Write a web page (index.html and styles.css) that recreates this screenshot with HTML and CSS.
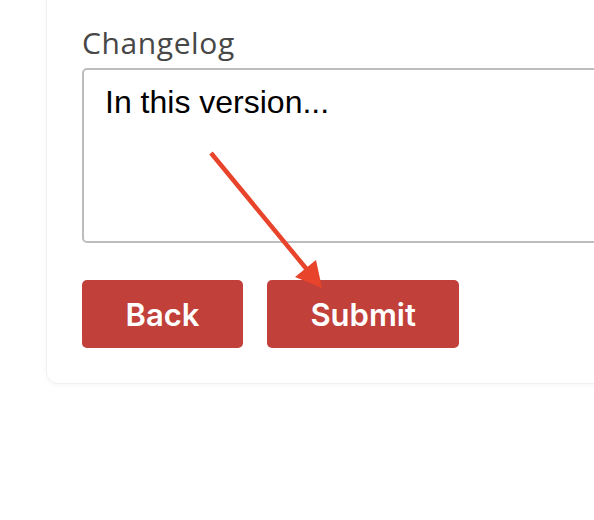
FILE: index.html
```html
<!DOCTYPE html>
<html lang="en">
<head>
    <meta charset="UTF-8">
    <meta name="viewport" content="width=device-width, initial-scale=1.0">
    <title>Changelog</title>
    <link rel="stylesheet" href="styles.css">
</head>
<body>
    <div class="page">
        <form class="card">
            <label class="field-label" for="changelog">Changelog</label>
            <textarea id="changelog" class="field-input">In this version...</textarea>

            <div class="actions">
                <button type="button" class="btn">Back</button>
                <button type="submit" class="btn">Submit</button>
            </div>
        </form>

        <!-- annotation arrow pointing at the submit button -->
        <svg class="arrow" width="594" height="520" viewBox="0 0 594 520">
            <line x1="211" y1="153" x2="309" y2="272" stroke="#e8432b" stroke-width="4.5"/>
            <polygon points="322,288 295,277 316,260" fill="#e8432b"/>
        </svg>
    </div>
</body>
</html>
```

FILE: styles.css
```css
/* Page and card */
body {
    margin: 0;
    padding: 0;
    background-color: #ffffff;
    font-family: 'Liberation Sans', Arial, sans-serif;
    overflow: hidden;
}

.page {
    display: flow-root;
    position: relative;
    height: 520px;
    padding-left: 46px;
}

.card {
    width: 700px;
    margin-top: -40px;
    padding: 65px 35px 35px;
    background-color: #ffffff;
    border: 1px solid #f0f0f0;
    border-radius: 12px;
    box-shadow: 0 1px 6px rgba(0, 0, 0, 0.04);
}

.field-label {
    display: block;
    font-family: 'Open Sans', sans-serif;
    font-weight: 500;
    font-size: 30px;
    letter-spacing: 0.6px;
    line-height: 34px;
    color: #474747;
    margin-bottom: 8px;
}

.field-input {
    display: block;
    box-sizing: border-box;
    width: 560px;
    height: 175px;
    padding: 12px 21px;
    border: 2px solid #bdbdbd;
    border-radius: 5px;
    font-family: 'Liberation Sans', Arial, sans-serif;
    font-size: 32px;
    line-height: 40px;
    color: #000000;
    resize: none;
    outline: none;
}

.actions {
    display: flex;
    gap: 24px;
    margin-top: 37px;
}

.btn {
    height: 68px;
    padding: 0 43.5px;
    background-color: #c1403a;
    color: #ffffff;
    border: none;
    border-radius: 5px;
    font-family: Inter, sans-serif;
    font-weight: 600;
    font-size: 31px;
    cursor: pointer;
}

.arrow {
    position: absolute;
    left: 0;
    top: 0;
    pointer-events: none;
}
```
